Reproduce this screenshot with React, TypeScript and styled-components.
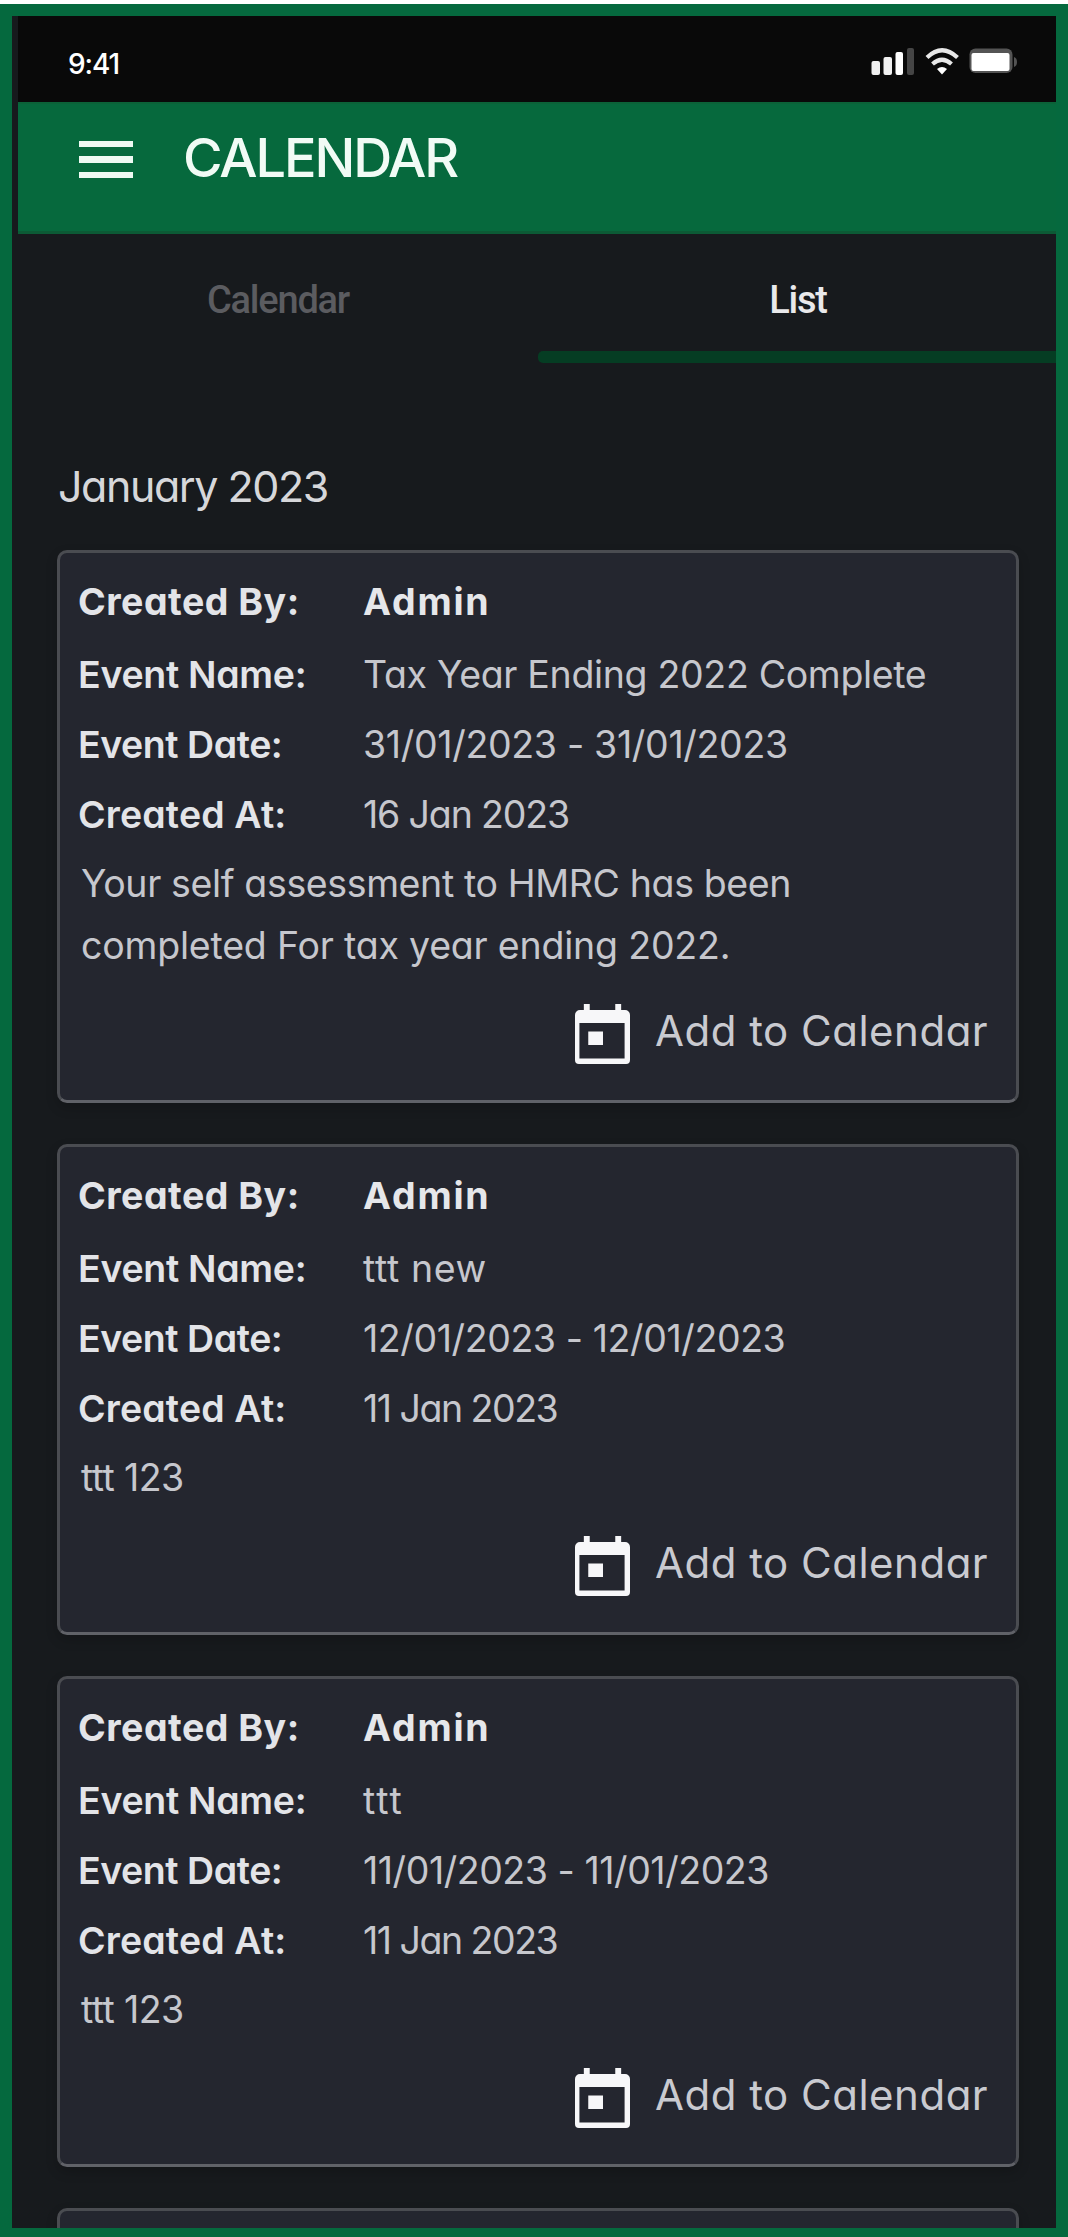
import React from "react";
import styled, { createGlobalStyle } from "styled-components";

const GlobalStyle = createGlobalStyle`
  *, *::before, *::after { box-sizing: border-box; }
  body {
    margin: 0;
    background: #fff;
    font-family: Inter, "Open Sans", sans-serif;
    font-feature-settings: "cv11" 1;
  }
`;

const Page = styled.div`
  height: 2237px;
  padding-top: 4px;
  overflow: hidden;
`;

const Frame = styled.div`
  height: 2233px;
  border: 12px solid #05693e;
  border-bottom-width: 9px;
  background: #171a1d;
  overflow: hidden;
`;

const TopArea = styled.div`
  margin-left: 6px;
`;

const StatusBar = styled.div`
  height: 86px;
  padding: 0 39px 0 50px;
  display: flex;
  justify-content: space-between;
  background: #090909;
`;

const Clock = styled.span`
  line-height: 96px;
  font-size: 28px;
  font-weight: 500;
  letter-spacing: -1.1px;
  color: #fff;
`;

const StatusIcons = styled.svg`
  display: block;
  width: 146px;
  height: 30px;
  margin-top: 30px;
`;

const Header = styled.header`
  height: 132px;
  padding: 0 61px 20px;
  display: flex;
  align-items: center;
  gap: 50px;
  background: #06693d;
  border-top: 2px solid #0b6238;
  border-bottom: 3px solid #0c5a35;
`;

const Burger = styled.div`
  width: 54px;
  display: flex;
  flex-direction: column;
  gap: 9px;
  margin-top: 4px;
`;

const BurgerLine = styled.span`
  height: 6.6px;
  background: #eefaf3;
`;

const Title = styled.h1`
  margin: 0;
  font-size: 54px;
  line-height: 64px;
  font-weight: 500;
  letter-spacing: -2.1px;
  color: #f1fbf5;
`;

const Tabs = styled.nav`
  height: 129px;
  display: grid;
  grid-template-columns: 520px 1fr;
`;

const Tab = styled.div<{ $active?: boolean }>`
  position: relative;
  padding-top: 38px;
  padding-left: ${(p) => (p.$active ? 2 : 0)}px;
  text-align: center;
  font-family: Roboto, sans-serif;
  font-size: 38px;
  line-height: 56px;
  font-weight: 500;
  letter-spacing: -1.2px;
  color: ${(p) => (p.$active ? "#e9e9eb" : "#5b5c60")};
`;

const Indicator = styled.span`
  position: absolute;
  left: 0;
  right: 0;
  bottom: 0;
  height: 12px;
  border-radius: 5px 0 0 5px;
  background: #053d23;
`;

const List = styled.main`
  padding: 89px 37px 0 45px;
`;

const Month = styled.h2`
  margin: 0 0 30px 1px;
  font-size: 43px;
  line-height: 68px;
  font-weight: 400;
  letter-spacing: -1.45px;
  color: #d6d7da;
`;

const Cards = styled.div`
  display: flex;
  flex-direction: column;
  gap: 41px;
`;

const Card = styled.article`
  min-height: 60px;
  padding: 14px 26px 36px 18px;
  border: 3px solid #4a4c51;
  border-bottom-color: #606268;
  border-radius: 10px;
  background: #24262f;
  box-shadow: 0 5px 12px rgba(0, 0, 0, 0.18);
`;

const Row = styled.div<{ $lead?: boolean }>`
  display: grid;
  grid-template-columns: 285px 1fr;
  height: ${(p) => (p.$lead ? 73 : 70)}px;
  font-size: 37.5px;
  line-height: 70px;
  white-space: nowrap;
`;

const Label = styled.span<{ $spacing: number; $weight: number }>`
  font-weight: ${(p) => p.$weight};
  letter-spacing: ${(p) => p.$spacing}px;
  color: #e3e4e8;
`;

const Value = styled.span<{ $spacing: number; $strong?: boolean }>`
  font-weight: ${(p) => (p.$strong ? 700 : 400)};
  letter-spacing: ${(p) => p.$spacing}px;
  color: ${(p) => (p.$strong ? "#e6e7ea" : "#c6c7cd")};
`;

const Note = styled.div`
  padding: 3px 0 0 3px;
`;

const NoteLine = styled.p<{ $spacing: number }>`
  margin: 0;
  font-size: 37.5px;
  line-height: 62px;
  font-weight: 400;
  letter-spacing: ${(p) => p.$spacing}px;
  color: #c6c7cd;
  white-space: nowrap;
`;

const Action = styled.div`
  display: flex;
  justify-content: flex-end;
  height: 60px;
  margin-top: 27px;
`;

const ActionIcon = styled.svg`
  width: 55px;
  height: 60px;
`;

const ActionText = styled.span`
  width: 335px;
  margin-top: -3px;
  margin-left: 25px;
  font-size: 42px;
  line-height: 60px;
  font-weight: 400;
  letter-spacing: 0.5px;
  white-space: nowrap;
  color: #c9cad0;
`;

type Fitted = [text: string, spacing: number];

interface EventItem {
  name: Fitted;
  date: Fitted;
  created: Fitted;
  note: Fitted[];
}

const events: EventItem[] = [
  {
    name: ["Tax Year Ending 2022 Complete", -0.33],
    date: ["31/01/2023 - 31/01/2023", -0.32],
    created: ["16 Jan 2023", -1.15],
    note: [
      ["Your self assessment to HMRC has been", -0.37],
      ["completed For tax year ending 2022.", -0.2],
    ],
  },
  {
    name: ["ttt new", 0.6],
    date: ["12/01/2023 - 12/01/2023", -0.4],
    created: ["11 Jan 2023", -1.5],
    note: [["ttt 123", -0.6]],
  },
  {
    name: ["ttt", 1.9],
    date: ["11/01/2023 - 11/01/2023", -0.45],
    created: ["11 Jan 2023", -1.5],
    note: [["ttt 123", -0.6]],
  },
];

const TodayIcon = () => (
  <ActionIcon viewBox="0 0 56 60" preserveAspectRatio="none">
    <path
      fill="#f7f7f9"
      fillRule="evenodd"
      d="M9 0h6v6h26V0h6v6h4a5 5 0 0 1 5 5v45a4 4 0 0 1-4 4H4a4 4 0 0 1-4-4V11a5 5 0 0 1 5-5h4zM4.500 19v35.500h46V19z"
    />
    <rect x="13.500" y="27.500" width="15" height="13.500" fill="#f7f7f9" />
  </ActionIcon>
);

const PhoneStatus = () => (
  <StatusIcons viewBox="871 46 146 30">
    <rect x="871.500" y="61" width="8.500" height="14" rx="2" fill="#f0f0f0" />
    <rect x="883.500" y="57" width="8.500" height="18" rx="2" fill="#f0f0f0" />
    <rect x="895.500" y="52" width="7.500" height="23" rx="2" fill="#fff" />
    <rect x="907" y="48" width="7" height="27" rx="2" fill="#454545" />
    <g fill="none" stroke="#e8e8e8" strokeWidth="4.200">
      <path d="M927 57.500Q942 43 957.500 57.500" />
      <path d="M932.500 64Q942 55.500 951.500 64" />
    </g>
    <path d="M937 69Q942 65 947 69L942 74.500z" fill="#fff" />
    <rect x="969.500" y="48.500" width="43" height="24.500" rx="6" fill="#545454" />
    <rect x="971.500" y="53" width="38" height="18" rx="2" fill="#fff" />
    <path d="M1014 57c4 1 4 9 0 10z" fill="#545454" />
  </StatusIcons>
);

const EventCard = ({ item }: { item: EventItem }) => (
  <Card>
    <Row $lead>
      <Label $weight={700} $spacing={0.5}>Created By:</Label>
      <Value $strong $spacing={1.8}>Admin</Value>
    </Row>
    <Row>
      <Label $weight={600} $spacing={-0.3}>Event Name:</Label>
      <Value $spacing={item.name[1]}>{item.name[0]}</Value>
    </Row>
    <Row>
      <Label $weight={600} $spacing={-0.45}>Event Date:</Label>
      <Value $spacing={item.date[1]}>{item.date[0]}</Value>
    </Row>
    <Row>
      <Label $weight={600} $spacing={0.15}>Created At:</Label>
      <Value $spacing={item.created[1]}>{item.created[0]}</Value>
    </Row>
    <Note>
      {item.note.map(([text, spacing]) => (
        <NoteLine key={text} $spacing={spacing}>{text}</NoteLine>
      ))}
    </Note>
    <Action>
      <TodayIcon />
      <ActionText>Add to Calendar</ActionText>
    </Action>
  </Card>
);

export default function App() {
  return (
    <>
      <GlobalStyle />
      <Page>
        <Frame>
          <TopArea>
            <StatusBar>
              <Clock>9:41</Clock>
              <PhoneStatus />
            </StatusBar>
            <Header>
              <Burger>
                <BurgerLine />
                <BurgerLine />
                <BurgerLine />
              </Burger>
              <Title>CALENDAR</Title>
            </Header>
            <Tabs>
              <Tab>Calendar</Tab>
              <Tab $active>
                List
                <Indicator />
              </Tab>
            </Tabs>
          </TopArea>
          <List>
            <Month>January 2023</Month>
            <Cards>
              {events.map((item, index) => (
                <EventCard key={index} item={item} />
              ))}
              <Card />
            </Cards>
          </List>
        </Frame>
      </Page>
    </>
  );
}
